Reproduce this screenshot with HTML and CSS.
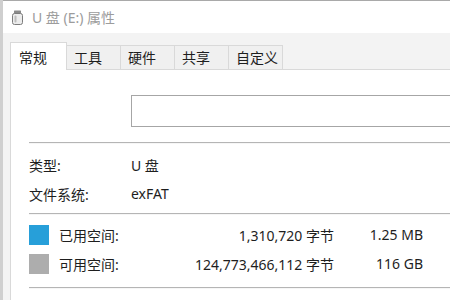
FILE: index.html
```html
<!DOCTYPE html>
<html lang="zh-CN">
<head>
<meta charset="utf-8">
<title>U 盘 (E:) 属性</title>
<link rel="stylesheet" href="styles.css">
</head>
<body>
<div class="window">
  <div class="titlebar">
    <svg class="title-icon" width="11" height="15" viewBox="0 0 11 15">
      <rect x="2" y="0.5" width="7" height="4" rx="0.5" fill="#8a8a8a"/>
      <rect x="0.5" y="3.5" width="10" height="11" rx="2" fill="#ececec" stroke="#7c7c7c"/>
      <rect x="2.5" y="5.5" width="2" height="7" rx="1" fill="#bdbdbd"/>
    </svg>
    <span class="title-text">U 盘 (E:) 属性</span>
  </div>
  <div class="dialog">
    <div class="tabs">
      <div class="tab selected">常规</div>
      <div class="tab">工具</div>
      <div class="tab">硬件</div>
      <div class="tab">共享</div>
      <div class="tab">自定义</div>
    </div>
    <div class="panel">
      <div class="name-row">
        <div class="name-box"></div>
      </div>
      <div class="sep sep1"></div>
      <div class="info">
        <div class="info-row"><span class="label">类型:</span><span class="value">U 盘</span></div>
        <div class="info-row"><span class="label">文件系统:</span><span class="value">exFAT</span></div>
      </div>
      <div class="sep sep2"></div>
      <div class="space">
        <div class="space-row">
          <span class="swatch used"></span>
          <span class="space-label">已用空间:</span>
          <span class="bytes">1,310,720 字节</span>
          <span class="size">1.25 MB</span>
        </div>
        <div class="space-row">
          <span class="swatch free"></span>
          <span class="space-label">可用空间:</span>
          <span class="bytes">124,773,466,112 字节</span>
          <span class="size">116 GB</span>
        </div>
      </div>
      <div class="sep sep3"></div>
    </div>
  </div>
</div>
</body>
</html>
```

FILE: styles.css
```css
html, body {
  margin: 0;
  padding: 0;
  background: #ffffff;
}

body {
  width: 450px;
  height: 300px;
  overflow: hidden;
  font-family: "Noto Sans", "Noto Sans CJK SC", sans-serif;
  font-size: 14px;
  color: #1e1e1e;
}

.window {
  height: 300px;
  display: flex;
  flex-direction: column;
  border-left: 3px solid #cfcfcf;
  box-sizing: border-box;
}

.titlebar {
  height: 33px;
  box-sizing: border-box;
  border-top: 1px solid #a9a9a9;
  background: #ffffff;
  display: flex;
  align-items: center;
  padding-left: 9px;
  gap: 9px;
}

.title-icon {
  flex: none;
  margin-top: 1px;
}

.title-text {
  color: #9c9c9c;
  font-size: 14px;
  white-space: nowrap;
}

.dialog {
  flex: 1;
  background: #f3f3f3;
  padding-left: 6px;
  padding-top: 9px;
  display: flex;
  flex-direction: column;
  min-height: 0;
}

.tabs {
  display: flex;
  align-items: flex-end;
  height: 27px;
  padding-left: 1px;
  position: relative;
  z-index: 1;
}

.tab {
  box-sizing: border-box;
  width: 54px;
  height: 24px;
  padding-left: 7px;
  border: 1px solid #d9d9d9;
  border-bottom: none;
  border-left: none;
  background: #f0f0f0;
  display: flex;
  align-items: center;
  white-space: nowrap;
  line-height: 1;
  padding-top: 1px;
}

.tab.selected {
  width: 57px;
  height: 28px;
  margin-bottom: -1px;
  padding-left: 8px;
  background: #ffffff;
  border-left: 1px solid #d9d9d9;
  padding-top: 2px;
}

.panel {
  flex: 1;
  background: #ffffff;
  border-top: 1px solid #d9d9d9;
  border-left: 1px solid #d9d9d9;
  padding-left: 18px;
  margin-left: 1px;
}

.name-row {
  padding-top: 25px;
  padding-left: 102px;
}

.name-box {
  height: 32px;
  box-sizing: border-box;
  border: 1px solid #a6a6a6;
  border-right: none;
}

.sep {
  height: 1px;
  background: #b5b5b5;
  border-bottom: 1px solid #f6f6f6;
}

.sep1 { margin-top: 15px; }
.sep2 { margin-top: 5px; }
.sep3 { margin-top: 9px; }

.info {
  padding-top: 6px;
}

.info-row {
  height: 29px;
  display: flex;
  align-items: center;
  white-space: nowrap;
}

.label {
  width: 102px;
  flex: none;
}

.space {
  padding-top: 5px;
}

.space-row {
  height: 29px;
  display: flex;
  align-items: center;
  white-space: nowrap;
}

.swatch {
  width: 20px;
  height: 20px;
  flex: none;
  margin-right: 10px;
}

.swatch.used { background: #279fd9; }
.swatch.free { background: #adadad; }

.space-label {
  width: 90px;
  flex: none;
}

.bytes {
  width: 185px;
  flex: none;
  text-align: right;
}

.size {
  width: 89px;
  flex: none;
  text-align: right;
}
```
